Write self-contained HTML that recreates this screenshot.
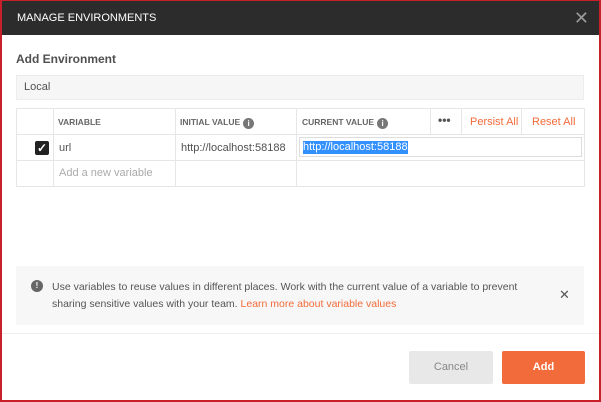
<!DOCTYPE html>
<html><head><style>
*{margin:0;padding:0;box-sizing:border-box}
body{width:601px;height:402px;overflow:hidden;background:#fff;font-family:"Liberation Sans",sans-serif;position:relative}
.frame{position:absolute;left:0;top:0;width:601px;height:402px;border:2px solid #c8202a;border-top-width:1px}
.hdr{position:absolute;left:2px;top:1px;width:597px;height:34px;background:#2c2c2c;color:#fff;font-size:11px;line-height:34px;padding-left:15px}
.x{position:absolute;right:10px;top:0;color:#999;font-size:18px;line-height:34px}
.a{position:absolute}
.t{font-size:11px;color:#505050}
.h{font-size:8.5px;font-weight:bold;color:#666}
.o{color:#f26b3a;font-size:11px}
.line{position:absolute;background:#e6e6e6}
.info{display:inline-block;width:11px;height:11px;border-radius:50%;background:#777;color:#fff;font-size:8px;text-align:center;line-height:11px;font-weight:bold;vertical-align:-1px;margin-left:3px}
</style></head><body>
<div class="frame"></div>
<div class="hdr">MANAGE ENVIRONMENTS<span class="x">✕</span></div>
<div class="a" style="left:16px;top:52px;font-size:12px;color:#505050;font-weight:bold">Add Environment</div>
<div class="a" style="left:16px;top:75px;width:568px;height:25px;background:#f6f6f6;border:1px solid #ececec"></div>
<div class="a t" style="left:24px;top:81px">Local</div>
<div class="a" style="left:16px;top:108px;width:569px;height:79px;border:1px solid #e6e6e6"></div>
<div class="line" style="left:16px;top:134px;width:569px;height:1px"></div>
<div class="line" style="left:16px;top:160px;width:569px;height:1px"></div>
<div class="line" style="left:53px;top:108px;width:1px;height:79px"></div>
<div class="line" style="left:175px;top:108px;width:1px;height:79px"></div>
<div class="line" style="left:296px;top:108px;width:1px;height:79px"></div>
<div class="line" style="left:430px;top:108px;width:1px;height:26px"></div>
<div class="line" style="left:461px;top:108px;width:1px;height:26px"></div>
<div class="line" style="left:521px;top:108px;width:1px;height:26px"></div>
<div class="a h" style="left:58px;top:117px">VARIABLE</div>
<div class="a h" style="left:180px;top:117px">INITIAL VALUE<span class="info">i</span></div>
<div class="a h" style="left:302px;top:117px">CURRENT VALUE<span class="info">i</span></div>
<div class="a" style="left:438px;top:113px;font-size:12px;color:#555;font-weight:bold">•••</div>
<div class="a o" style="left:470px;top:116px">Persist All</div>
<div class="a o" style="left:532px;top:116px">Reset All</div>
<div class="a" style="left:35px;top:141px;width:14px;height:14px;background:#222;border-radius:2px;color:#fff;font-size:12px;line-height:14px;text-align:center;font-weight:bold">✓</div>
<div class="a t" style="left:59px;top:142px">url</div>
<div class="a t" style="left:181px;top:142px">http://localhost:58188</div>
<div class="a" style="left:299px;top:137px;width:283px;height:20px;border:1px solid #ddd"></div>
<div class="a" style="left:303px;top:141px;font-size:11px;background:#3390ff;color:#fff;line-height:13px">http://localhost:58188</div>
<div class="a" style="left:59px;top:167px;font-size:11px;color:#aaa">Add a new variable</div>
<div class="a" style="left:16px;top:266px;width:568px;height:59px;background:#f7f7f7"></div>
<div class="a" style="left:31px;top:280px;width:12px;height:12px;border-radius:50%;background:#666;color:#fff;font-size:8px;font-weight:bold;text-align:center;line-height:12px">!</div>
<div class="a" style="left:52px;top:279px;font-size:10.5px;color:#555;line-height:17px;width:480px">Use variables to reuse values in different places. Work with the current value of a variable to prevent sharing sensitive values with your team. <span style="color:#f26b3a">Learn more about variable values</span></div>
<div class="a" style="left:559px;top:287px;font-size:13px;color:#555">✕</div>
<div class="line" style="left:2px;top:333px;width:597px;height:1px;background:#eee"></div>
<div class="a" style="left:409px;top:351px;width:84px;height:33px;background:#e8e8e8;border-radius:2px;color:#888;font-size:11px;text-align:center;line-height:33px">Cancel</div>
<div class="a" style="left:502px;top:351px;width:83px;height:33px;background:#f26b3a;border-radius:2px;color:#fff;font-size:11px;font-weight:bold;text-align:center;line-height:33px">Add</div>
</body></html>
